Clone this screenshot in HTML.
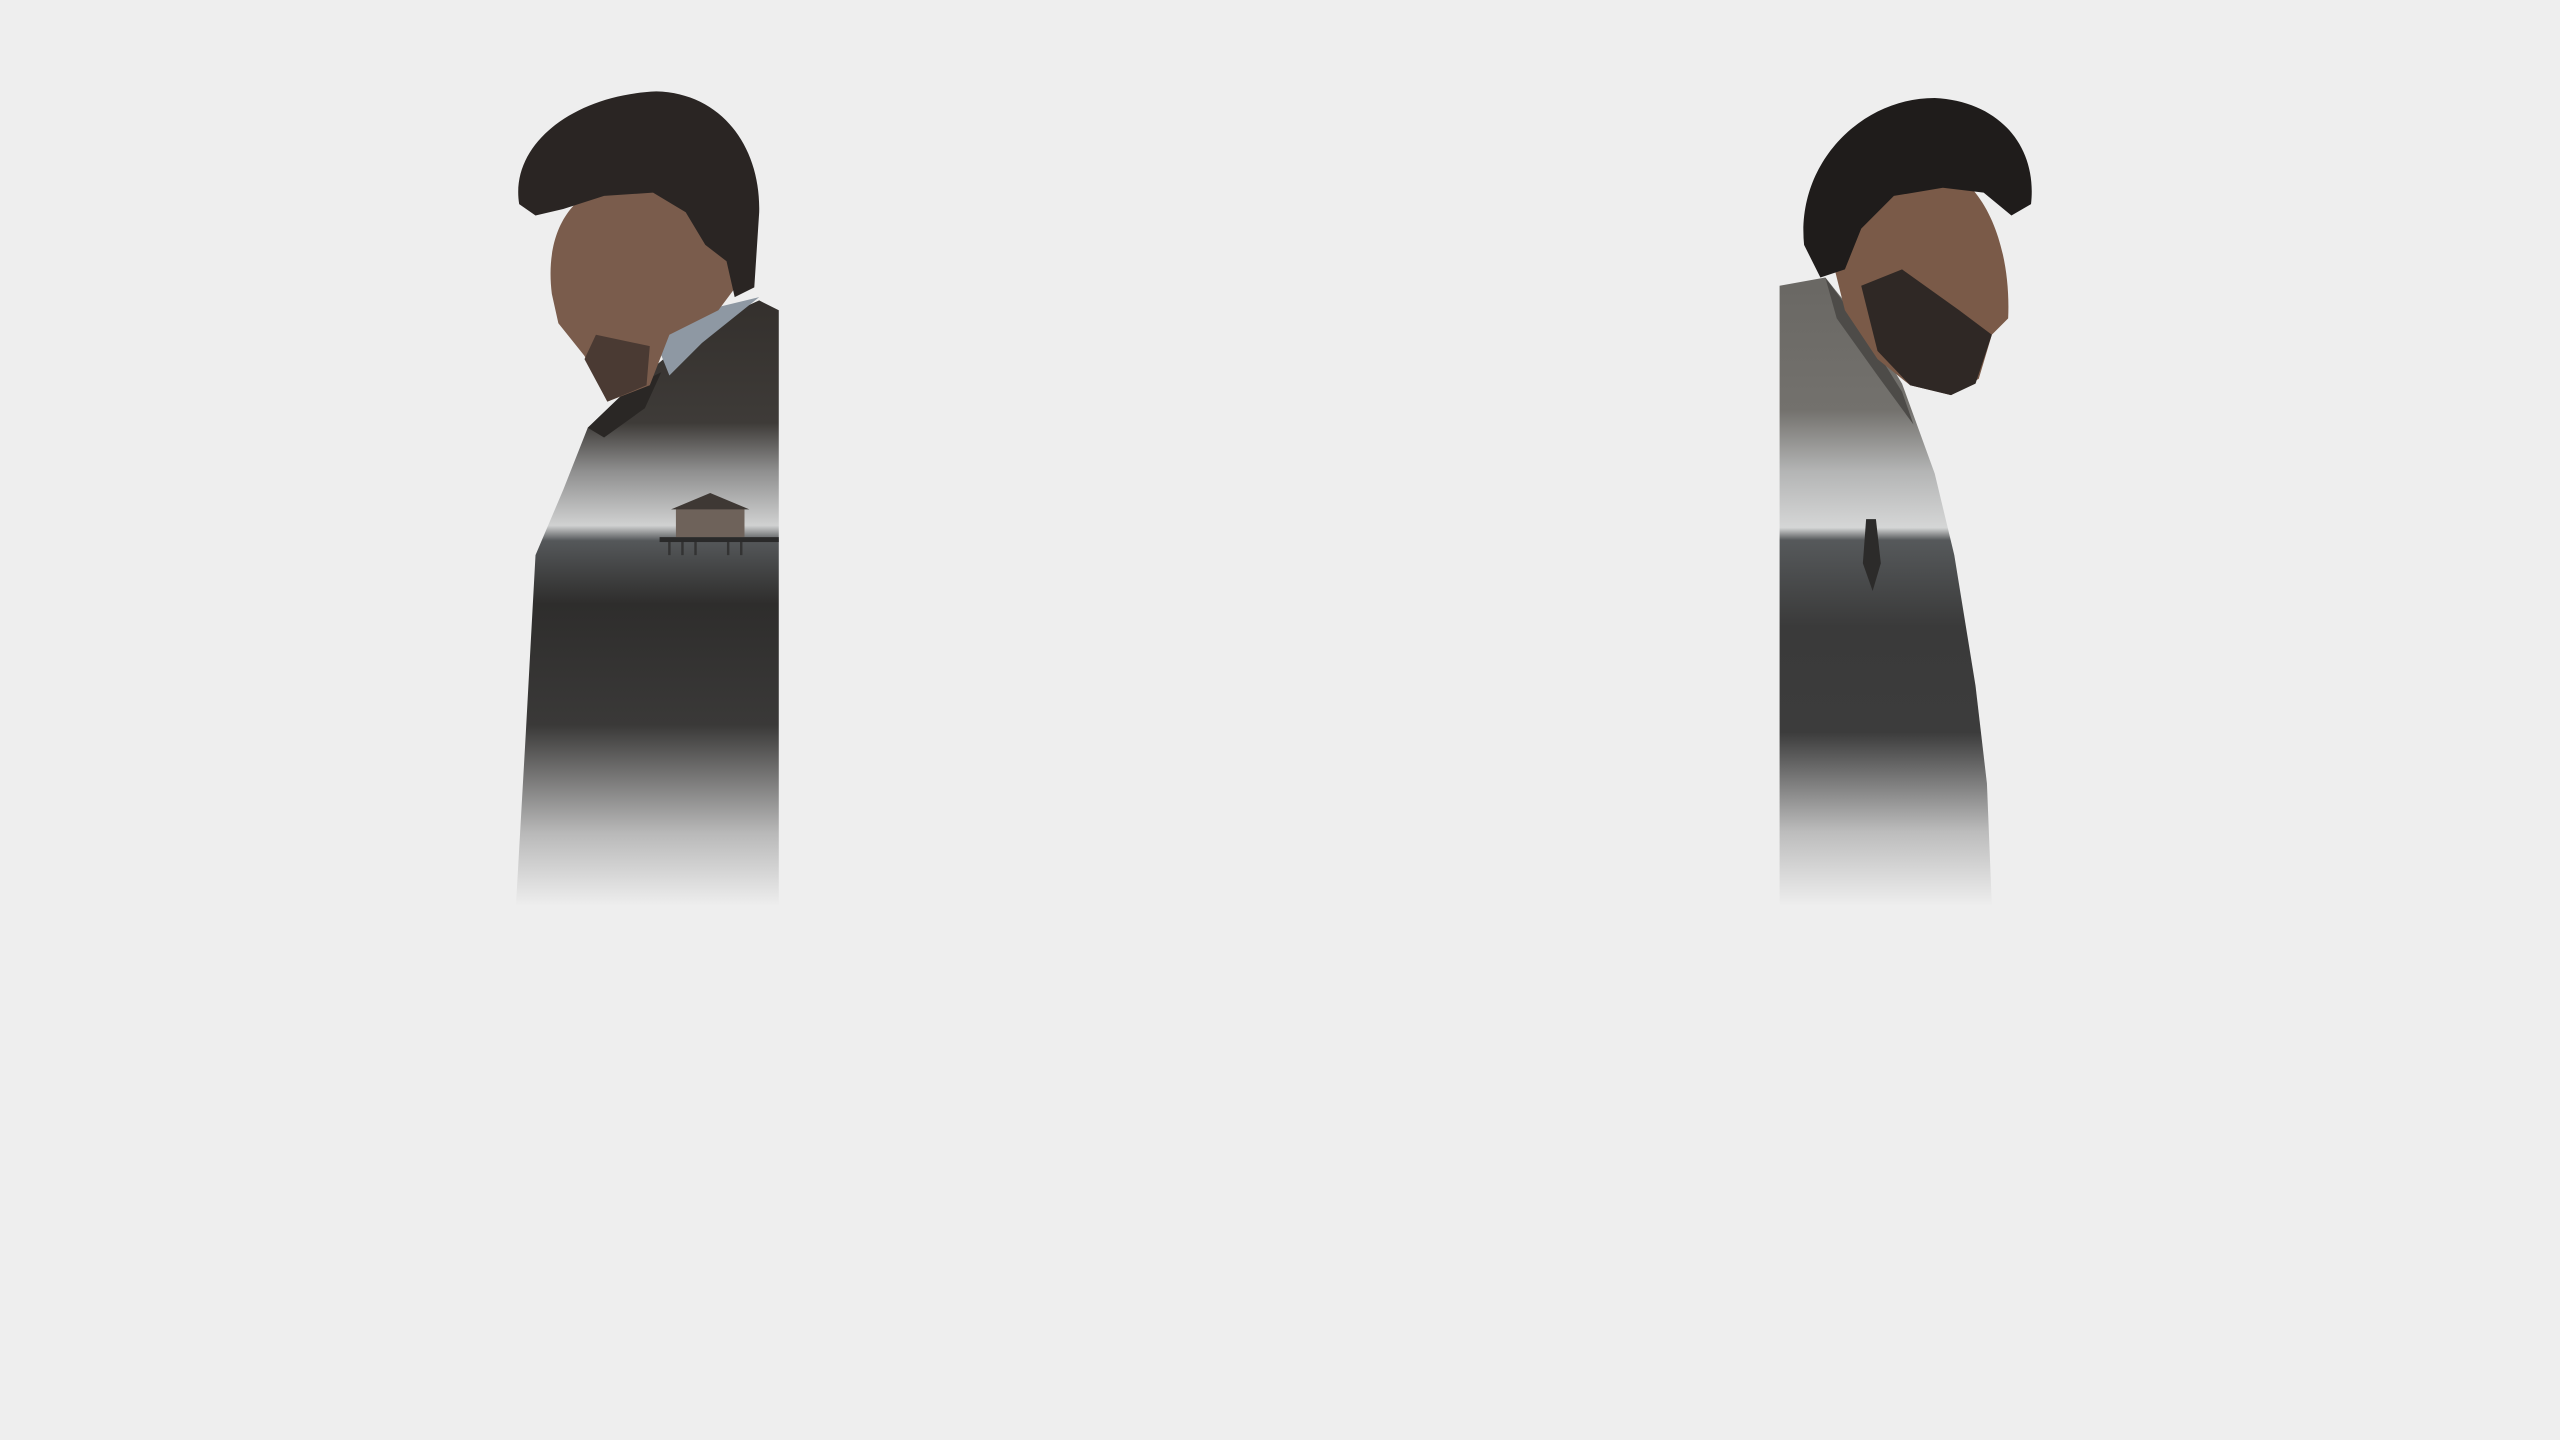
<!DOCTYPE html>
<html><head><meta charset="utf-8"><style>
html,body{margin:0;padding:0;background:#eeeeee;width:2560px;height:1440px;overflow:hidden}
svg{position:absolute;left:0;top:0}
</style></head><body>
<svg width="2560" height="1440" viewBox="0 0 1568 882" preserveAspectRatio="none">
<defs>
<linearGradient id="coatL" gradientUnits="userSpaceOnUse" x1="0" y1="185" x2="0" y2="555">
<stop offset="0" stop-color="#34302d"/>
<stop offset="0.2" stop-color="#3e3b38"/>
<stop offset="0.28" stop-color="#8f8f8f"/>
<stop offset="0.37" stop-color="#d0d1d1"/>
<stop offset="0.395" stop-color="#55585a"/>
<stop offset="0.5" stop-color="#2e2d2c"/>
<stop offset="0.7" stop-color="#3a3938"/>
<stop offset="0.88" stop-color="#b9b9b9"/>
<stop offset="1" stop-color="#eeeeee"/>
</linearGradient>
<linearGradient id="coatR" gradientUnits="userSpaceOnUse" x1="0" y1="175" x2="0" y2="555">
<stop offset="0" stop-color="#6a6864"/>
<stop offset="0.2" stop-color="#73716d"/>
<stop offset="0.3" stop-color="#b4b5b5"/>
<stop offset="0.39" stop-color="#d5d6d6"/>
<stop offset="0.41" stop-color="#56595b"/>
<stop offset="0.55" stop-color="#3a3a3a"/>
<stop offset="0.72" stop-color="#3c3c3c"/>
<stop offset="0.88" stop-color="#bcbcbc"/>
<stop offset="1" stop-color="#eeeeee"/>
</linearGradient>
</defs>
<!-- left figure -->
<path d="M360,262 L385,238 L430,200 L465,184 L477,190 L477,555 L316,555 L322,450 L328,340 L345,300 Z" fill="url(#coatL)"/>
<path d="M400,205 L440,188 L465,182 L430,210 L410,230 Z" fill="#8e98a3"/>
<path d="M360,262 L385,238 L405,228 L395,250 L370,268 Z" fill="#2a2725"/>
<path d="M338,180 C334,148 345,120 375,112 C420,102 450,130 455,170 L440,190 L410,205 L398,236 L372,246 L358,218 L342,198 Z" fill="#7a5c4c"/>
<path d="M318,125 C312,88 352,58 402,56 C442,57 466,90 465,130 L462,176 L450,182 L445,160 L432,150 L420,130 L400,118 L370,120 L345,128 L328,132 Z" fill="#2a2523"/>
<path d="M365,205 L398,212 L396,236 L372,246 L358,220 Z" fill="#4a3a33"/>
<rect x="414" y="311" width="42" height="18" fill="#6e625a"/>
<path d="M411,312 L435,302 L459,312 Z" fill="#3e3834"/>
<rect x="404" y="329" width="73" height="3" fill="#2a2a2a"/>
<path d="M410,332 v8 M418,332 v8 M426,332 v8 M446,332 v8 M454,332 v8" stroke="#333" stroke-width="1.5"/>
<!-- right figure -->
<path d="M1090,175 L1118,170 L1150,210 L1165,235 L1185,290 L1197,340 L1210,420 L1217,480 L1220,555 L1090,555 Z" fill="url(#coatR)"/>
<path d="M1118,170 L1140,200 L1165,240 L1172,260 L1150,230 L1125,195 Z" fill="#4d4b48"/>
<path d="M1120,150 C1118,110 1150,95 1180,100 C1215,105 1232,150 1230,195 L1220,205 L1212,232 L1195,242 L1170,236 L1150,220 L1130,190 Z" fill="#7a5a48"/>
<path d="M1140,175 L1165,165 L1200,190 L1220,205 L1210,235 L1195,242 L1170,236 L1150,215 Z" fill="#2f2825"/>
<path d="M1105,150 C1100,100 1140,60 1185,60 C1225,62 1248,90 1244,125 L1232,132 L1215,118 L1190,115 L1160,120 L1140,140 L1130,165 L1115,170 Z" fill="#1f1c1b"/>
<path d="M1143,318 L1149,318 L1152,345 L1147,362 L1141,345 Z" fill="#2c2b2a"/>
</svg>
</body></html>
